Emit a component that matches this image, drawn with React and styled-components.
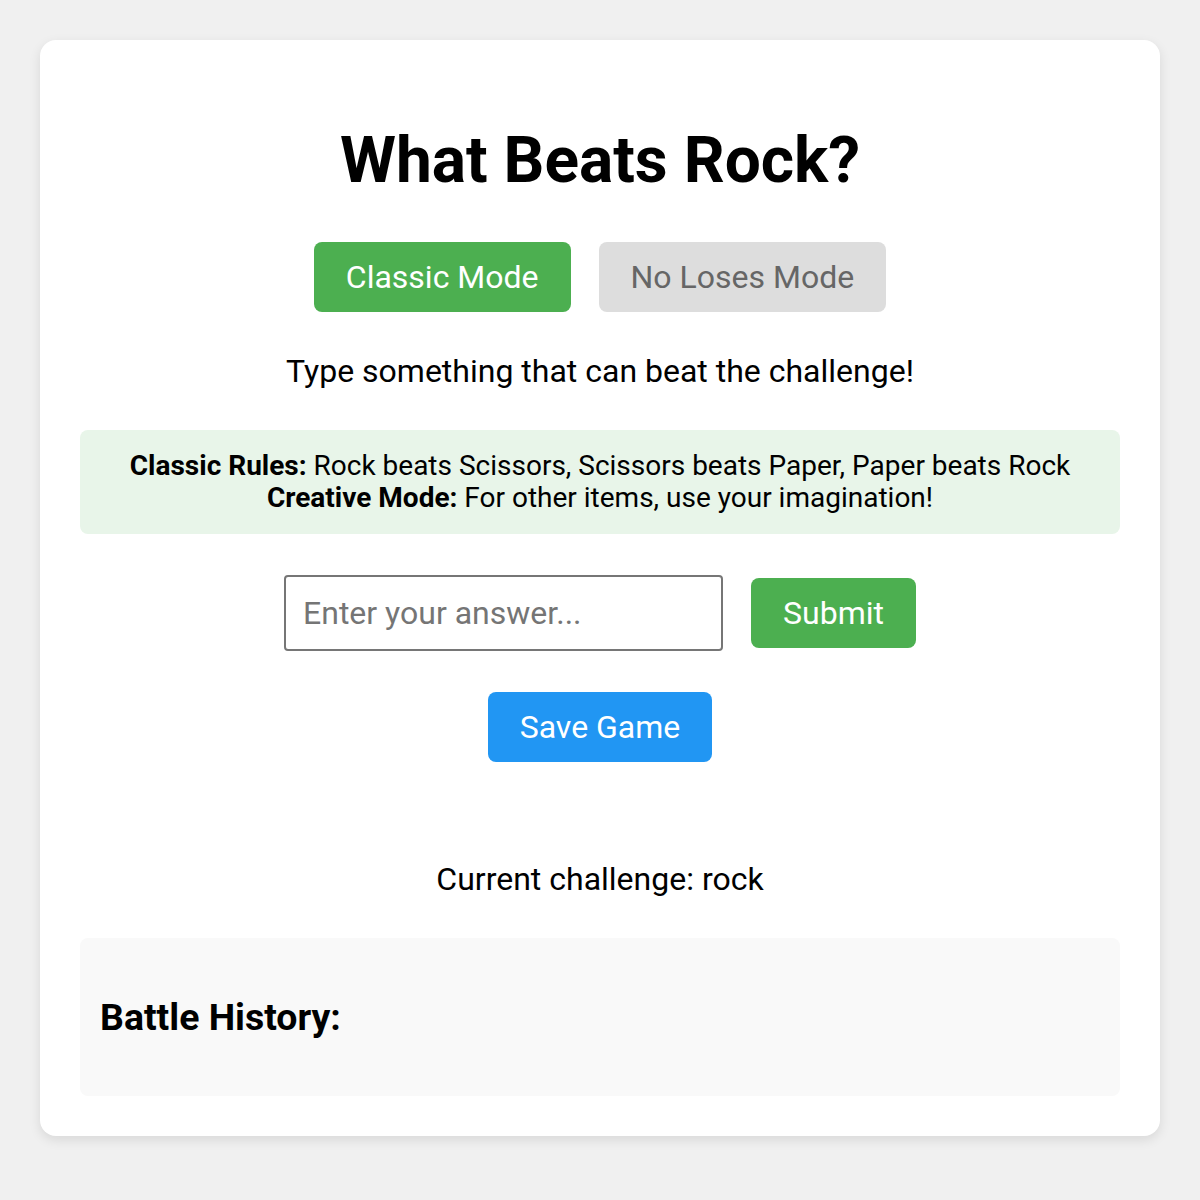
import React, { useState } from "react";
import styled, { createGlobalStyle } from "styled-components";

const GlobalStyle = createGlobalStyle`
    html, body {
        margin: 0;
        padding: 0;
        background-color: #f0f0f0;
        font-family: Roboto, "Liberation Sans", sans-serif;
    }
`;

function App() {
    const [mode, setMode] = useState("classic");
    const [answer, setAnswer] = useState("");
    return (
        <Page>
            <GlobalStyle />
            <Card>
                <Title>What Beats Rock?</Title>
                <ModeRow>
                    <ModeButton
                        $active={mode === "classic"}
                        onClick={() => setMode("classic")}
                    >
                        Classic Mode
                    </ModeButton>
                    <ModeButton
                        $active={mode === "noloses"}
                        onClick={() => setMode("noloses")}
                    >
                        No Loses Mode
                    </ModeButton>
                </ModeRow>
                <Instruction>Type something that can beat the challenge!</Instruction>
                <Rules>
                    <strong>Classic Rules:</strong> Rock beats Scissors, Scissors
                    beats Paper, Paper beats Rock
                    <br />
                    <strong>Creative Mode:</strong> For other items, use your
                    imagination!
                </Rules>
                <AnswerForm onSubmit={(e) => e.preventDefault()}>
                    <Input
                        type="text"
                        placeholder="Enter your answer..."
                        value={answer}
                        onChange={(e) => setAnswer(e.target.value)}
                    />
                    <ActionButton type="submit" $color="#4caf50">
                        Submit
                    </ActionButton>
                </AnswerForm>
                <SaveRow>
                    <ActionButton $color="#2196f3">Save Game</ActionButton>
                </SaveRow>
                <Challenge>Current challenge: rock</Challenge>
                <History>
                    <HistoryTitle>Battle History:</HistoryTitle>
                </History>
            </Card>
        </Page>
    );
}

const Page = styled.div`
    padding: 40px;
`;
const Card = styled.div`
    background-color: #fff;
    border-radius: 16px;
    box-shadow: 0 4px 12px rgba(0, 0, 0, 0.1);
    padding: 40px;
    text-align: center;
`;
const Title = styled.h1`
    font-size: 64px;
    font-weight: bold;
    color: #000;
    margin: 43px 0 44px;
`;
const ModeRow = styled.div`
    display: flex;
    justify-content: center;
    gap: 28px;
`;
const ModeButton = styled.button`
    height: 70px;
    padding: 0 32px;
    border: none;
    border-radius: 8px;
    font-family: inherit;
    font-size: 32px;
    cursor: pointer;
    background-color: ${(p) => (p.$active ? "#4caf50" : "#ddd")};
    color: ${(p) => (p.$active ? "#fff" : "#666")};
`;
const Instruction = styled.p`
    font-size: 32px;
    color: #000;
    margin: 40px 0;
`;
const Rules = styled.div`
    background-color: #e8f5e9;
    border-radius: 8px;
    padding: 20px;
    font-size: 28px;
    line-height: 32px;
    color: #000;
`;
const AnswerForm = styled.form`
    display: flex;
    justify-content: center;
    align-items: center;
    gap: 28px;
    margin-top: 41px;
`;
const Input = styled.input`
    width: 439px;
    height: 76px;
    box-sizing: border-box;
    padding: 0 17px;
    border: 2px solid #767676;
    border-radius: 4px;
    font-family: inherit;
    font-size: 32px;
    &::placeholder {
        color: #757575;
    }
`;
const ActionButton = styled.button`
    height: 70px;
    padding: 0 32px;
    border: none;
    border-radius: 8px;
    font-family: inherit;
    font-size: 32px;
    color: #fff;
    cursor: pointer;
    background-color: ${(p) => p.$color};
`;
const SaveRow = styled.div`
    display: flex;
    justify-content: center;
    margin-top: 41px;
`;
const Challenge = styled.p`
    font-size: 32px;
    color: #000;
    margin: 98px 0 40px;
`;
const History = styled.div`
    background-color: #f9f9f9;
    border-radius: 8px;
    padding: 20px;
    text-align: left;
`;
const HistoryTitle = styled.h3`
    font-size: 37.44px;
    font-weight: bold;
    margin: 37px 0;
`;
export default App;
